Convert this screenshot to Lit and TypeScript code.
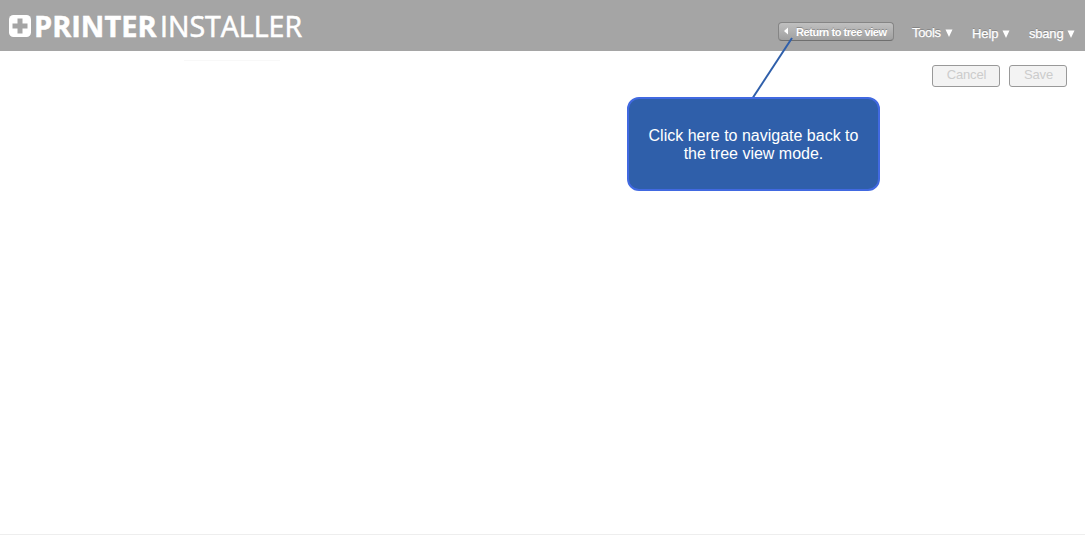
import { LitElement, html, css } from "lit";
import { customElement } from "lit/decorators.js";

@customElement("app-root")
export class AppRoot extends LitElement {
  static styles = css`
    :host {
      display: flex;
      flex-direction: column;
      position: relative;
      height: 535px;
      box-sizing: border-box;
      overflow: hidden;
      background: #fff;
      font-family: "Liberation Sans", Arial, sans-serif;
    }
    .header {
      display: flex;
      justify-content: space-between;
      height: 51px;
      background: #a5a5a5;
      color: #fff;
    }
    .logo { display: block; width: 310px; height: 51px; }
    .logo text { font-family: "Open Sans", "Noto Sans", sans-serif; font-size: 29px; fill: #fff; stroke: #fff; }
    .logo .bold { font-weight: 700; stroke-width: 0.5px; }
    .logo .light { font-weight: 400; stroke-width: 0.6px; }
    .nav { display: flex; align-items: flex-start; padding: 22px 10px 0 0; }
    .back {
      display: flex;
      align-items: center;
      box-sizing: border-box;
      width: 116px;
      height: 19px;
      margin-right: 18px;
      padding: 0 0 0 5px;
      border: 1px solid #858585;
      border-bottom-color: #6f6f6f;
      border-radius: 4px;
      background: linear-gradient(#c0c0c0, #a0a0a0);
      color: #fff;
      font: 700 11px/17px "Liberation Sans", Arial, sans-serif;
      letter-spacing: -0.44px;
      white-space: nowrap;
      text-shadow: 0 -1px 0 #8b8b8b;
    }
    .back svg { width: 4px; height: 8px; margin: 0 8px 1px 0; flex: none; }
    .back span { padding-top: 2px; }
    .item {
      display: flex;
      justify-content: space-between;
      align-items: center;
      height: 20px;
      margin-right: 19px;
      font-size: 13px;
      white-space: nowrap;
      text-shadow: 0 -1px 0 #858585;
      -webkit-text-stroke: 0.25px #fff;
    }
    .item svg { width: 8px; height: 8px; margin-top: 2px; }
    .item.low { height: 22px; }
    .item:last-child { margin-right: 0; }
    .tools { width: 41px; letter-spacing: -0.35px; }
    .help { width: 38px; letter-spacing: -0.1px; }
    .user { width: 46px; letter-spacing: -0.2px; }
    .main { flex: 1; display: flex; justify-content: space-between; align-items: flex-start; }
    .rule { width: 96px; height: 1px; margin: 9px 0 0 184px; background: #f8f8f8; }
    .actions { display: flex; gap: 9px; padding: 14px 18px 0 0; }
    .action {
      box-sizing: border-box;
      height: 22px;
      padding: 0 0 2px 1px;
      border: 1px solid #999;
      border-radius: 3px;
      background: #f3f3f3;
      color: #ccc;
      font: 13px/16px "Liberation Sans", Arial, sans-serif;
      letter-spacing: -0.15px;
      text-align: center;
    }
    .cancel { width: 68px; }
    .save { width: 58px; }
    .footer { height: 1px; background: #eee; }
    .pointer { position: absolute; left: 740px; top: 30px; width: 60px; height: 70px; }
    .tip {
      position: absolute;
      left: 627px;
      top: 97px;
      width: 253px;
      height: 94px;
      box-sizing: border-box;
      padding-top: 2px;
      display: flex;
      align-items: center;
      justify-content: center;
      border: 2px solid #4169e1;
      border-radius: 12px;
      background: #2f5faa;
      color: #fff;
      font-size: 16px;
      line-height: 18px;
      text-align: center;
    }
  `;

  private arrow() {
    return html`<svg viewBox="0 0 8 8"><path d="M.5 .5H7.500L4 8Z" fill="#fff" /></svg>`;
  }

  render() {
    return html`
      <div class="header">
        <svg class="logo" viewBox="0 0 310 51">
          <rect x="9" y="15" width="22" height="22" rx="4.5" fill="#fff" />
          <path d="M17.500 18.500h5v5h5v5h-5v5h-5v-5h-5v-5h5Z" fill="#a5a5a5" />
          <text class="bold" x="34" y="36.500" textLength="122.500" lengthAdjust="spacingAndGlyphs">PRINTER</text>
          <text class="light" x="160" y="36.500" textLength="142" lengthAdjust="spacingAndGlyphs">INSTALLER</text>
        </svg>
        <div class="nav">
          <button class="back">
            <svg viewBox="0 0 4 8"><path d="M4 .5V7.500L0 4Z" fill="#fff" /></svg>
            <span>Return to tree view</span>
          </button>
          <div class="item tools"><span>Tools</span>${this.arrow()}</div>
          <div class="item low help"><span>Help</span>${this.arrow()}</div>
          <div class="item low user"><span>sbang</span>${this.arrow()}</div>
        </div>
      </div>
      <div class="main">
        <div class="rule"></div>
        <div class="actions">
          <button class="action cancel" disabled>Cancel</button>
          <button class="action save" disabled>Save</button>
        </div>
      </div>
      <div class="footer"></div>
      <svg class="pointer" viewBox="0 0 60 70">
        <path d="M52 8L12 69" stroke="#2f5faa" stroke-width="2" fill="none" />
      </svg>
      <div class="tip"><span>Click here to navigate back to<br />the tree view mode.</span></div>
    `;
  }
}
